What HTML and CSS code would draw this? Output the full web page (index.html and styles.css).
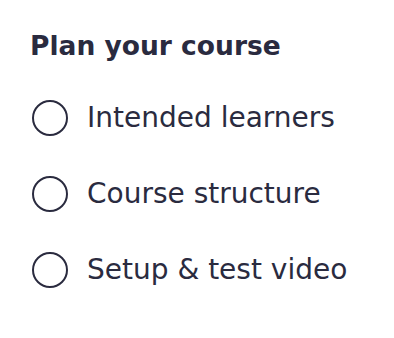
FILE: index.html
```html
<!DOCTYPE html>
<html lang="en">
<head>
  <meta charset="UTF-8">
  <meta name="viewport" content="width=device-width, initial-scale=1.0">
  <title>Plan your course</title>
  <link rel="stylesheet" href="styles.css">
</head>
<body>
  <div class="panel">
    <h2 class="panel-title">Plan your course</h2>
    <ul class="step-list">
      <li class="step-item">
        <span class="step-check"></span>
        Intended learners
      </li>
      <li class="step-item">
        <span class="step-check"></span>
        Course structure
      </li>
      <li class="step-item">
        <span class="step-check"></span>
        Setup &amp; test video
      </li>
    </ul>
  </div>
</body>
</html>
```

FILE: styles.css
```css
body {
  margin: 0;
  background: #fff;
  color: #2a2b3f;
  font-family: "DejaVu Sans", Inter, sans-serif;
}

.panel {
  padding: 30px 30px;
}

.panel-title {
  margin: 0 0 38px;
  font-size: 26.5px;
  font-weight: 700;
  line-height: 32px;
}

.step-list {
  list-style: none;
  margin: 0;
  padding: 0;
  display: flex;
  flex-direction: column;
  gap: 40px;
}

.step-item {
  display: flex;
  align-items: center;
  gap: 19px;
  font-size: 28px;
  line-height: 36px;
}

.step-check {
  box-sizing: border-box;
  width: 36px;
  height: 36px;
  margin-left: 2px;
  border: 2px solid #2a2b3f;
  border-radius: 50%;
  flex-shrink: 0;
}
```
